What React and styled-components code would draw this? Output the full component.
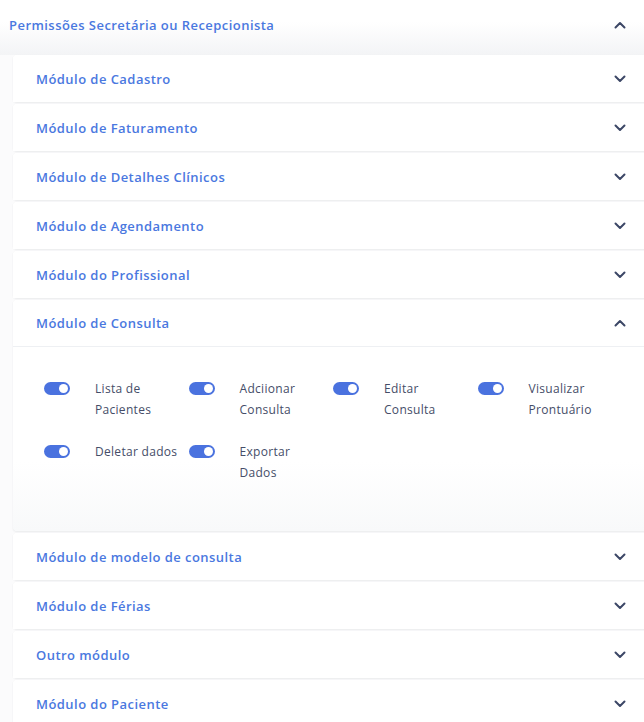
import React from 'react';
import styled, { createGlobalStyle } from 'styled-components';

const GlobalStyle = createGlobalStyle`
  body {
    margin: 0;
    background: #fbfbfc;
    font-family: "Open Sans", "Liberation Sans", sans-serif;
  }
`;

const Page = styled.section`
  width: 644px;
  overflow: hidden;
`;

const TopHeader = styled.div`
  height: 55px;
  display: flex;
  align-items: center;
  justify-content: space-between;
  padding: 0 18px 6px 9px;
  box-sizing: border-box;
  background: linear-gradient(#ffffff 40%, #f3f4f6);
`;

const TopTitle = styled.span`
  color: #4a78e0;
  font-size: 13px;
  font-weight: 600;
  letter-spacing: 0.45px;
`;

const List = styled.div`
  display: flex;
  flex-direction: column;
  gap: 2px;
  padding-left: 13px;
  margin-right: -12px;
`;

const Card = styled.div`
  background: linear-gradient(#ffffff 70%, #f8f9fa);
  border-radius: 4px;
  box-shadow: 0 1px 2px rgba(30, 40, 60, 0.07), 0 0 1px rgba(30, 40, 60, 0.06);
`;

const CardHeader = styled.div`
  height: ${p => (p.open ? 46 : 47)}px;
  display: flex;
  align-items: center;
  justify-content: space-between;
  padding: 0 30px 0 23px;
  border-bottom: ${p => (p.open ? '1px solid #eef0f3' : 'none')};
  background: #fff;
  border-radius: 4px 4px 0 0;
`;

const CardTitle = styled.span`
  color: #4a78e0;
  font-size: 13px;
  font-weight: 600;
  letter-spacing: 0.45px;
`;

const Body = styled.div`
  display: grid;
  grid-template-columns: repeat(4, 144.5px);
  row-gap: 21px;
  padding: 31px 0 48px 31px;
`;

const Item = styled.div`
  display: flex;
  align-items: flex-start;
  gap: 25px;
`;

const Toggle = styled.span`
  flex: none;
  width: 26px;
  height: 13px;
  margin-top: 4px;
  border-radius: 7px;
  background: #4a72df;
  position: relative;
  &::after {
    content: '';
    position: absolute;
    top: 2px;
    right: 2px;
    width: 9px;
    height: 9px;
    border-radius: 50%;
    background: #fff;
  }
`;

const Label = styled.span`
  max-width: 84px;
  color: #454d68;
  font-size: 12px;
  font-weight: 500;
  line-height: 21px;
  letter-spacing: 0.3px;
`;

const Chevron = ({ up }) => (
  <svg width="12" height="8" viewBox="0 0 12 8">
    <polyline
      points={up ? '1.5,6.5 6,2 10.5,6.5' : '1.5,1.5 6,6 10.5,1.5'}
      fill="none"
      stroke="#3c4766"
      strokeWidth="2"
      strokeLinecap="round"
      strokeLinejoin="round"
    />
  </svg>
);

const modules = [
  'Módulo de Cadastro',
  'Módulo de Faturamento',
  'Módulo de Detalhes Clínicos',
  'Módulo de Agendamento',
  'Módulo do Profissional',
  'Módulo de Consulta',
  'Módulo de modelo de consulta',
  'Módulo de Férias',
  'Outro módulo',
  'Módulo do Paciente',
];

const permissions = [
  'Lista de Pacientes',
  'Adciionar Consulta',
  'Editar Consulta',
  'Visualizar Prontuário',
  'Deletar dados',
  'Exportar Dados',
];

const App = () => (
  <Page>
    <GlobalStyle />
    <TopHeader>
      <TopTitle>Permissões Secretária ou Recepcionista</TopTitle>
      <Chevron up />
    </TopHeader>
    <List>
      {modules.map(name => {
        const open = name === 'Módulo de Consulta';
        return (
          <Card key={name}>
            <CardHeader open={open}>
              <CardTitle>{name}</CardTitle>
              <Chevron up={open} />
            </CardHeader>
            {open && (
              <Body>
                {permissions.map(p => (
                  <Item key={p}>
                    <Toggle />
                    <Label>{p}</Label>
                  </Item>
                ))}
              </Body>
            )}
          </Card>
        );
      })}
    </List>
  </Page>
);

export default App;
